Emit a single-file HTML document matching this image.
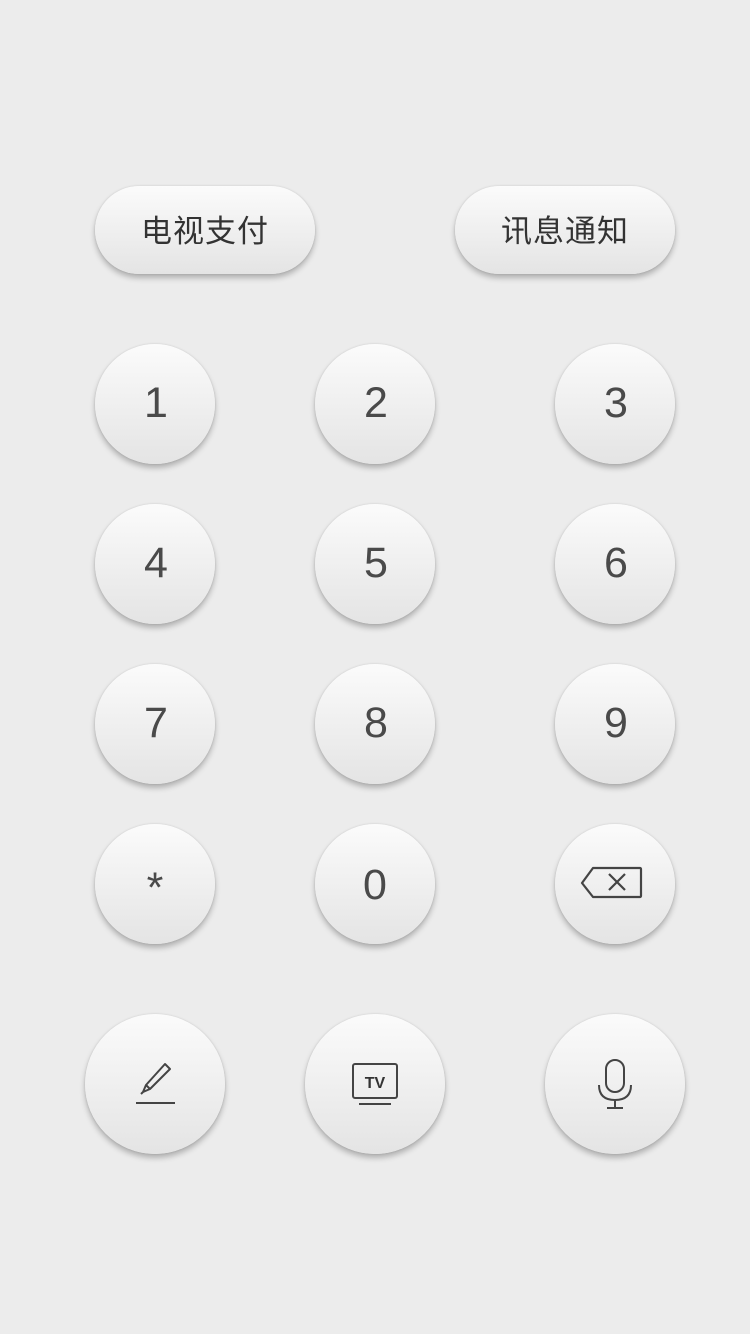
<!DOCTYPE html>
<html><head><meta charset="utf-8"><style>
body{margin:0;width:750px;height:1334px;background:#ececec;position:relative;overflow:hidden;font-family:"Liberation Sans","Noto Sans CJK SC",sans-serif;color:#444}
.b{position:absolute;background:linear-gradient(#fbfbfb,#e4e4e4);box-shadow:0 4px 6px rgba(0,0,0,.25),0 0 2px rgba(0,0,0,.12);display:flex;align-items:center;justify-content:center}
.p{width:220px;height:88px;border-radius:44px;top:186px;font-size:31px;letter-spacing:1px;color:#333}
.p span{margin-top:-3px}
.c{width:120px;height:120px;border-radius:50%;font-size:43px;color:#4a4a4a}
.c span{margin-left:2px;margin-top:-2px}
.g{width:140px;height:140px;border-radius:50%}
</style></head><body>
<div class="b p" style="left:95px"><span>电视支付</span></div>
<div class="b p" style="left:455px"><span>讯息通知</span></div>
<div class="b c" style="left:95px;top:344px"><span>1</span></div>
<div class="b c" style="left:315px;top:344px"><span>2</span></div>
<div class="b c" style="left:555px;top:344px"><span>3</span></div>
<div class="b c" style="left:95px;top:504px"><span>4</span></div>
<div class="b c" style="left:315px;top:504px"><span>5</span></div>
<div class="b c" style="left:555px;top:504px"><span>6</span></div>
<div class="b c" style="left:95px;top:664px"><span>7</span></div>
<div class="b c" style="left:315px;top:664px"><span>8</span></div>
<div class="b c" style="left:555px;top:664px"><span>9</span></div>
<div class="b c" style="left:95px;top:824px"><span style="margin-top:8px;margin-left:0">*</span></div>
<div class="b c" style="left:315px;top:824px"><span style="margin-top:2px;margin-left:0">0</span></div>
<div class="b c" style="left:555px;top:824px"><svg width="64" height="34" viewBox="0 0 64 34" style="margin-left:-6px;margin-top:-2px"><path d="M13 2H60a1 1 0 0 1 1 1V30a1 1 0 0 1-1 1H13L2 17Z" fill="none" stroke="#444" stroke-width="2.2" stroke-linejoin="round"/><path d="M29 8L45 24M45 8L29 24" stroke="#444" stroke-width="2.2"/></svg></div>
<div class="b g" style="left:85px;top:1014px"><svg width="44" height="44" viewBox="0 0 44 44"><path d="M32 2L37 7L17 27L10 30L13 23Z M13 23L17 27 M10 30L8 32" fill="none" stroke="#444" stroke-width="2" stroke-linejoin="round"/><path d="M3 41H42" stroke="#444" stroke-width="2"/></svg></div>
<div class="b g" style="left:305px;top:1014px"><svg width="48" height="44" viewBox="0 0 48 44"><rect x="2" y="2" width="44" height="34" rx="2" fill="none" stroke="#444" stroke-width="2"/><text x="24" y="26" text-anchor="middle" font-family="Liberation Sans" font-weight="bold" font-size="16" fill="#333">TV</text><path d="M8 42H40" stroke="#444" stroke-width="2"/></svg></div>
<div class="b g" style="left:545px;top:1014px"><svg width="40" height="52" viewBox="0 0 40 52"><rect x="11" y="2" width="18" height="32" rx="9" fill="none" stroke="#444" stroke-width="2"/><path d="M4 27Q4 42 20 42Q36 42 36 27M20 42V50M12 50H28" fill="none" stroke="#444" stroke-width="2"/></svg></div>
</body></html>
